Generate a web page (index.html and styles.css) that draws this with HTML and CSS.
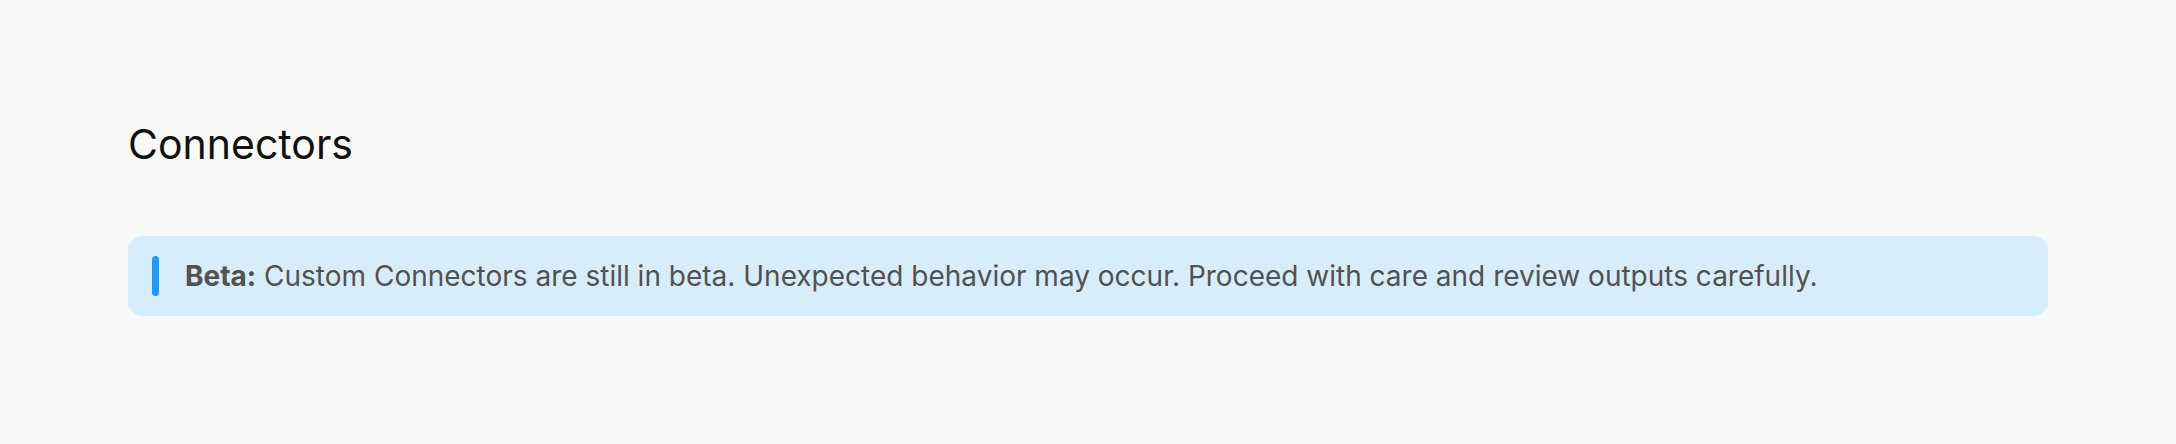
FILE: index.html
```html
<!DOCTYPE html>
<html>
<head>
<meta charset="utf-8">
<link rel="stylesheet" href="styles.css">
</head>
<body>
<main class="page">
  <h1 class="title">Connectors</h1>
  <div class="notice">
    <span class="notice-bar"></span>
    <p class="notice-text"><strong>Beta:</strong> Custom Connectors are still in beta. Unexpected behavior may occur. Proceed with care and review outputs carefully.</p>
  </div>
</main>
</body>
</html>
```
FILE: styles.css
```css
html, body {
  margin: 0;
  padding: 0;
  background: #f9f9f8;
}
body {
  font-family: "Inter", "Noto Sans", sans-serif;
}
.page {
  padding: 120px 128px 0 128px;
  width: 1920px;
}
.title {
  margin: 0;
  font-size: 41px;
  font-weight: 400;
  line-height: 48px;
  color: #111110;
}
.notice {
  margin-top: 68px;
  display: flex;
  align-items: center;
  gap: 26px;
  height: 80px;
  box-sizing: border-box;
  padding: 0 24px;
  background: #d6edfc;
  border-radius: 14px;
}
.notice-bar {
  width: 7px;
  height: 40px;
  border-radius: 4px;
  background: #1e9bff;
  flex: none;
}
.notice-text {
  margin: 0;
  font-size: 28px;
  line-height: 34px;
  color: #55514d;
}
.notice-text strong {
  font-weight: 700;
}
```
